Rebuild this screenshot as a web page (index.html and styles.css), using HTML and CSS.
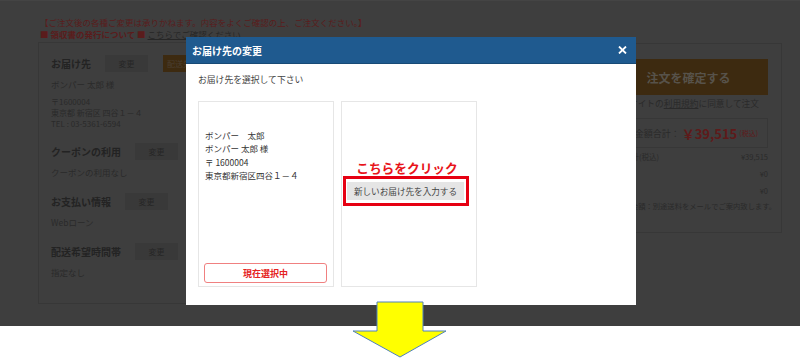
FILE: index.html
```html
<!DOCTYPE html>
<html lang="ja">
<head>
<meta charset="utf-8">
<title>お届け先の変更</title>
<link rel="stylesheet" href="styles.css">
</head>
<body>
<div class="page">
  <div class="notice">
    <p class="notice-line">【ご注文後の各種ご変更は承りかねます。内容をよくご確認の上、ご注文ください。】</p>
    <p class="notice-line notice-strong">■ 領収書の発行について ■ <span class="notice-link">こちらでご確認ください</span></p>
  </div>

  <div class="main">
    <section class="order-box">
      <div class="group">
        <div class="group-head">
          <h3 class="group-title">お届け先</h3>
          <span class="btn-change">変更</span>
          <span class="btn-add">配送先を追加</span>
        </div>
        <p class="group-value">ボンパー 太郎 様</p>
        <p class="address">〒1600004<br>東京都 新宿区 四谷１－４<br>TEL : 03-5361-6594</p>
      </div>
      <div class="group">
        <div class="group-head">
          <h3 class="group-title">クーポンの利用</h3>
          <span class="btn-change">変更</span>
        </div>
        <p class="group-value">クーポンの利用なし</p>
      </div>
      <div class="group">
        <div class="group-head">
          <h3 class="group-title">お支払い情報</h3>
          <span class="btn-change">変更</span>
        </div>
        <p class="group-value">Webローン</p>
      </div>
      <div class="group">
        <div class="group-head">
          <h3 class="group-title">配送希望時間帯</h3>
          <span class="btn-change">変更</span>
        </div>
        <p class="group-value">指定なし</p>
      </div>
    </section>

    <aside class="summary">
      <div class="btn-confirm">注文を確定する</div>
      <p class="agree">当サイトの<span class="agree-link">利用規約</span>に同意して注文</p>
      <div class="total">
        <span class="total-label">お支払金額合計：</span>
        <span class="total-price">￥39,515</span>
        <span class="total-tax">(税込)</span>
      </div>
      <div class="sum-row"><span>商品合計(税込)</span><span>¥39,515</span></div>
      <div class="sum-row"><span>送料</span><span>¥0</span></div>
      <div class="sum-row"><span>手数料</span><span>¥0</span></div>
      <p class="sum-note">※送料金額：別途送料をメールでご案内致します。</p>
    </aside>
  </div>

  <div class="modal">
    <div class="modal-header">
      <span class="modal-title">お届け先の変更</span>
      <svg class="modal-close" width="9" height="8" viewBox="0 0 9 8"><path d="M1 0.5 L8 7.5 M8 0.5 L1 7.5" stroke="#fff" stroke-width="1.8" fill="none"/></svg>
    </div>
    <div class="modal-body">
      <p class="modal-lead">お届け先を選択して下さい</p>
      <div class="cards">
        <div class="card card-current">
          <p class="card-address">ボンパー　太郎<br>ボンパー 太郎 様<br>〒 1600004<br>東京都新宿区四谷１－４</p>
          <div class="btn-selected">現在選択中</div>
        </div>
        <div class="card card-new">
          <p class="click-here">こちらをクリック</p>
          <div class="highlight">
            <div class="btn-new">新しいお届け先を入力する</div>
          </div>
        </div>
      </div>
    </div>
  </div>

  <svg class="arrow" width="96" height="60" viewBox="0 0 96 60">
    <polygon points="25,2 71,2 71,31 94,31 48,57 1,31 25,31" fill="#ffff00" stroke="#4f81bd" stroke-width="1"/>
  </svg>
</div>
</body>
</html>
```

FILE: styles.css
```css
* { box-sizing: border-box; }
html, body { margin: 0; padding: 0; }
body {
  background: #ffffff;
  font-family: "Noto Sans CJK JP", "Noto Sans", sans-serif;
  color: #262626;
  width: 800px;
  height: 360px;
  overflow: hidden;
}
p, h3 { margin: 0; }

.page {
  position: relative;
  height: 326px;
  background: #3e3e3e;
  border-top: 1px solid #444444;
  padding: 15px 0 0 40px;
}

.notice-line {
  font-size: 8.5px;
  line-height: 12px;
  color: #5a1c1c;
  white-space: nowrap;
}
.notice-strong { font-weight: bold; }
.notice-link {
  color: #262626;
  font-weight: normal;
  text-decoration: underline;
}

.main {
  display: flex;
  gap: 10px;
  margin-top: 2px;
  margin-left: -2px;
}

.order-box {
  width: 548px;
  height: 262px;
  border: 1px solid #373737;
  padding: 12px 12px 0 12px;
}
.group + .group { margin-top: 14px; }
.group-head {
  display: flex;
  align-items: center;
  height: 17px;
}
.group-title {
  font-size: 10px;
  font-weight: bold;
  color: #232323;
  line-height: 17px;
}
.btn-change {
  margin-left: 14px;
  width: 43px;
  height: 17px;
  background: #393939;
  color: #262626;
  font-size: 8px;
  display: flex;
  align-items: center;
  justify-content: center;
}
.btn-add {
  margin-left: 15px;
  width: 90px;
  height: 17px;
  background: #3d2a10;
  color: #4a3e30;
  font-size: 8px;
  padding-left: 4px;
  display: flex;
  align-items: center;
}
.group-value {
  margin-top: 6px;
  font-size: 8.5px;
  line-height: 13px;
  color: #2a2a2a;
}
.address {
  margin-top: 5px;
  font-size: 8px;
  line-height: 11px;
  color: #2a2a2a;
}

.summary {
  width: 186px;
  height: 190px;
  margin-top: 1px;
  border: 1px solid #373737;
  padding: 15px 13px 0 12px;
  display: flex;
  flex-direction: column;
}
.btn-confirm {
  height: 36px;
  background: #3d2a10;
  color: #57524a;
  font-size: 12px;
  font-weight: bold;
  display: flex;
  align-items: center;
  justify-content: center;
}
.agree {
  margin-top: 3px;
  font-size: 8.7px;
  line-height: 12px;
  text-align: right;
  padding-right: 9px;
  white-space: nowrap;
  color: #2a2a2a;
}
.agree-link { text-decoration: underline; }
.total {
  margin-top: 8px;
  height: 30px;
  border: 1px solid #373737;
  display: flex;
  align-items: center;
  justify-content: flex-end;
  padding-right: 9px;
  white-space: nowrap;
}
.total-label { font-size: 9px; color: #2a2a2a; }
.total-price {
  font-size: 13px;
  font-weight: bold;
  color: #5e1a1a;
  margin-left: 2px;
}
.total-tax { font-size: 7px; color: #5e1a1a; margin-left: 2px; }
.sum-row {
  display: flex;
  justify-content: space-between;
  font-size: 7.5px;
  line-height: 17px;
  color: #2a2a2a;
}
.sum-note {
  font-size: 7.3px;
  line-height: 14px;
  color: #2a2a2a;
  white-space: nowrap;
  text-align: right;
  padding-right: 5px;
}

.modal {
  position: absolute;
  left: 186px;
  top: 36px;
  width: 450px;
  height: 268px;
  background: #ffffff;
  display: flex;
  flex-direction: column;
}
.modal-header {
  height: 27px;
  background: #1f5a8f;
  border-bottom: 1px solid #184a76;
  display: flex;
  align-items: center;
  justify-content: space-between;
  padding: 0 9px 0 6px;
}
.modal-title {
  color: #ffffff;
  font-size: 10px;
  font-weight: bold;
}
.modal-close { display: block; }
.modal-body {
  padding: 9px 12px 0 12px;
}
.modal-lead {
  font-size: 8.8px;
  line-height: 14px;
  color: #444;
}
.cards {
  margin-top: 14px;
  display: flex;
  gap: 7px;
}
.card {
  width: 136px;
  height: 186px;
  border: 1px solid #e6e6e6;
  display: flex;
  flex-direction: column;
}
.card-current {
  justify-content: space-between;
  padding: 27px 6px 3px 5px;
}
.card-address {
  font-size: 8.5px;
  line-height: 13.3px;
  color: #333;
  padding-left: 1px;
}
.btn-selected {
  height: 20px;
  border: 1.5px solid #f08080;
  border-radius: 3px;
  color: #e52222;
  font-size: 9px;
  font-weight: bold;
  display: flex;
  align-items: center;
  justify-content: center;
}
.card-new {
  align-items: center;
  padding-top: 58px;
}
.click-here {
  font-size: 12.7px;
  font-weight: bold;
  color: #e8141a;
  line-height: 15px;
  margin-left: -4px;
}
.highlight {
  margin-top: 1px;
  margin-left: -6px;
  border: 3px solid #e60012;
  padding: 3px 2px 3px 1px;
}
.btn-new {
  width: 117px;
  height: 18px;
  background: #e5e5e5;
  color: #444;
  font-size: 8.6px;
  display: flex;
  align-items: center;
  justify-content: center;
}

.arrow {
  position: absolute;
  left: 352px;
  top: 299px;
  display: block;
}
```
